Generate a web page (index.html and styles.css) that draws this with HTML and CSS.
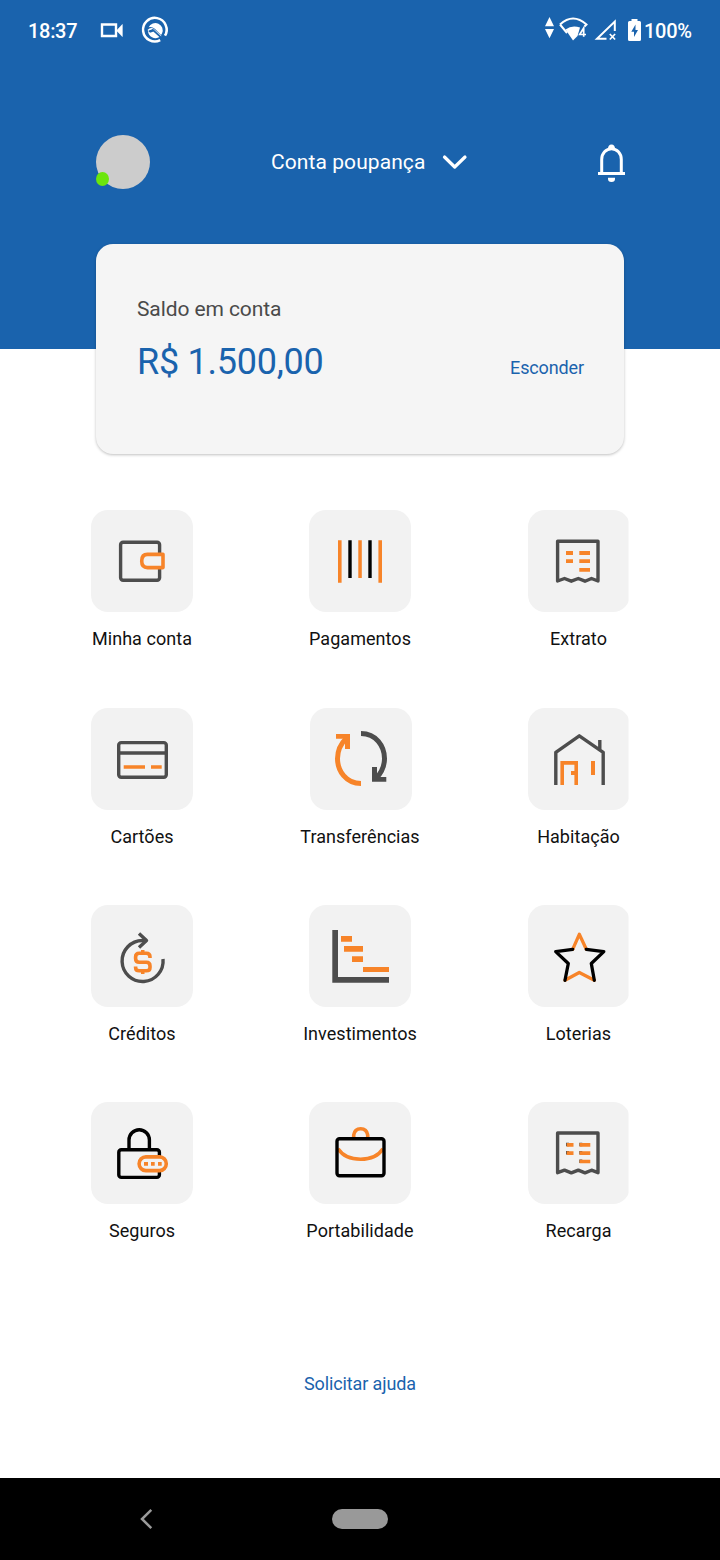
FILE: index.html
```html
<!DOCTYPE html>
<html lang="pt-BR">
<head>
<meta charset="utf-8">
<title>Conta poupança</title>
<link rel="stylesheet" href="styles.css">
</head>
<body>
<div class="screen">
  <header class="header">
    <div class="status">
      <span class="clock">18:37</span>
      <svg class="status-left" width="70" height="30" viewBox="100 15 70 30">
        <path d="M102 24.500h14v11.500h-14z" fill="none" stroke="#fff" stroke-width="2.400"/>
        <path d="M117 30.200l5.300-5.700v12l-5.300-5.500z" fill="#fff" stroke="#fff" stroke-width=".6"/>
        <path d="M160.200 40.200A11.800 11.800 0 1 1 165 35.700" fill="none" stroke="#fff" stroke-width="2.500"/>
        <path d="M148.600 27.200A7.300 7.300 0 0 1 162 33.500L161 35L154.800 28.800Q152 26.500 148.600 27.200Z" fill="#fff"/>
        <path d="M148 30.500Q151 27.500 154 30L161 36.500" fill="none" stroke="#fff" stroke-width="1.500"/>
        <path d="M148 31L150.800 32.500L153.500 31.500L159.500 37A7.500 7.500 0 0 1 148 31Z" fill="#fff"/>
        <path d="M149.500 32l3.300-2.300 8.500 7.800" fill="none" stroke="#1a63ad" stroke-width="1.600"/>
      </svg>
      <svg class="status-right" width="100" height="30" viewBox="542 15 100 30">
        <path d="M545 26.200l4.500-9.200 4.500 9.200zM545 29h9l-4.500 9.200z" fill="#fff"/>
        <path d="M560 24.500Q573 12.500 586.500 24.500L584.500 26.500M560 24.500L567 33" fill="none" stroke="#fff" stroke-width="2"/>
        <path d="M565.500 29.500Q572 24.500 580 27.500L577.500 36L573 40.500z" fill="#fff"/>
        <path d="M583.700 36.800V28L579.700 34.500H586" fill="none" stroke="#fff" stroke-width="1.700"/>
        <path d="M606.500 38.800H597L614.800 21.500V31" fill="none" stroke="#fff" stroke-width="2"/>
        <path d="M609.800 34l5.300 5.500m0-5.500l-5.300 5.500" stroke="#fff" stroke-width="1.700"/>
        <path d="M628 22.500q0-1.500 1.500-1.500h2v-2h6v2h2q1.500 0 1.500 1.500v17q0 1.500-1.500 1.500h-10q-1.500 0-1.500-1.500z" fill="#fff"/>
        <path d="M635.500 24.500l-4.200 7.200h2.700v5.300l4-7h-2.500z" fill="#1a63ad"/>
      </svg>
      <span class="percent">100%</span>
    </div>
    <div class="account-bar">
      <div class="avatar"><span class="online"></span></div>
      <div class="account">
        <span>Conta poupança</span>
        <svg width="26" height="16" viewBox="0 0 26 16"><path d="M2.500 3l10.200 10L23 3" fill="none" stroke="#fff" stroke-width="3.200" stroke-linecap="round" stroke-linejoin="round"/></svg>
      </div>
      <svg class="bell" width="30" height="40" viewBox="0 0 30 40">
        <path d="M5.700 31V18.500a9.800 10.800 0 0 1 19.600 0V31" fill="none" stroke="#fff" stroke-width="3"/>
        <path d="M2 31h27v3H2zM12 39.200v-2.500h7v1.300q0 3-3.500 3t-3.500-3zM12 8q0-4.500 3.500-4.500T19 8z" fill="#fff"/>
      </svg>
    </div>
  </header>

  <section class="card">
    <div class="card-title">Saldo em conta</div>
    <div class="balance-row">
      <span class="balance">R$ 1.500,00</span>
      <span class="link">Esconder</span>
    </div>
  </section>

  <main class="grid">
    <div class="item"><svg class="tile" viewBox="0 0 102 102"><g class="ink"><rect x="29.600" y="32.300" width="39" height="38" rx="2.500"/></g><path class="orange-line" d="M72 44.400v13.200H56.500q-5.800 0-5.800-6.600t5.800-6.600z" stroke-linejoin="round"/></svg><span>Minha conta</span></div>

    <div class="item"><svg class="tile" viewBox="0 0 102 102"><path class="orange" d="M29 30.300h3.600v42.400H29zM49.300 30.300h3.500V68h-3.500zM69.400 30.300H73v42.400h-3.600z"/><path class="black" d="M39.300 30.300h3.400V68h-3.400zM59.300 30.300h3.400V68h-3.400z"/></svg><span>Pagamentos</span></div>

    <div class="item"><svg class="tile clipped" viewBox="0 0 102 102"><path class="ink" d="M29.600 71V31.300H70V71l-6.500-2.500-6.500 2.700-6.700-2.700-7 2.700-6.800-2.700z"/><path class="orange" d="M38 41h7v4h-7zM51.300 41H62v4H51.300zM38 49.300h7v3.700h-7zM51.300 49.300H62V53H51.300zM51.300 58H62v3.700H51.300z"/></svg><span>Extrato</span></div>

    <div class="item"><svg class="tile" viewBox="0 0 102 102"><g class="ink"><rect x="27.700" y="34.600" width="47.600" height="34.700" rx="2.500"/><path d="M28 45h47"/></g><path class="orange" d="M32.700 57.200H54v3.600H32.700zM60 57.200h10.700v3.600H60z"/></svg><span>Cartões</span></div>

    <div class="item"><svg class="tile shifted" viewBox="0 0 102 102"><path d="M51 25.400C66 25.400 74.500 38 74.500 50.500C74.500 59 71 65.500 65.500 71" fill="none" stroke="#4d4d4d" stroke-width="5"/><path class="dark" d="M62 59h5v10h9.300v4.700H62z"/><path d="M51 75.600C36 75.600 27.500 63 27.500 50.500C27.500 42 31 35.500 36.500 30" fill="none" stroke="#f78429" stroke-width="5"/><path class="orange" d="M26 26h14v15h-5V30.700h-9z"/></svg><span>Transferências</span></div>

    <div class="item"><svg class="tile clipped" viewBox="0 0 102 102"><path class="ink" d="M27.800 77V44.300L51.300 27.800L75.200 44.300V77M71.800 42V32"/><path class="orange-line" d="M34.200 77V54.900h14V77"/><path class="orange" d="M43 63h5v4h-5zM63 53h4v14h-4z"/></svg><span>Habitação</span></div>

    <div class="item"><svg class="tile" viewBox="0 0 102 102"><path class="ink" d="M72 54a20.500 20.500 0 1 1-20.500-18.500h4"/><path class="ink" d="M48 28.600l7.500 6.900-7.500 6.900"/><path class="orange-line" d="M59 53v-1q0-3.700-3.700-3.700h-7q-3.700 0-3.700 3.700v1.500q0 3.700 3.700 3.700h7q3.700 0 3.700 3.700v1.500q0 3.400-3.700 3.400h-7q-3.700 0-3.700-3.400v-1"/><path class="orange" d="M50 45h3.500v3H50zM50 66h3.500v3H50z"/></svg><span>Créditos</span></div>

    <div class="item"><svg class="tile" viewBox="0 0 102 102"><path class="dark" d="M23.300 25H29v47h51v5.700H23.300z"/><path class="orange" d="M32 31h11v5.700H32zM35 41h19v5.700H35zM43 51.200h11V57H43zM54 62h26v5H54z"/></svg><span>Investimentos</span></div>

    <div class="item"><svg class="tile clipped" viewBox="0 0 102 102"><g fill="none" stroke-width="3.300" stroke-linejoin="round" stroke-linecap="round"><path stroke="#f78429" d="M44.700 44.300L51.300 29.300L58.300 44.300M37 75.300L51.300 67.500L66.300 75.300"/><path stroke="#000" d="M44.700 44.300L27.700 46.600L40.300 58.500L37 75.300M58.300 44.300L75.800 46.600L63.300 58.500L66.300 75.300"/></g></svg><span>Loterias</span></div>

    <div class="item"><svg class="tile" viewBox="0 0 102 102"><g fill="none" stroke="#000" stroke-width="3.400"><rect x="27.800" y="47.700" width="40.600" height="27.700" rx="2.500"/><path d="M38 47V38a10.200 10.300 0 0 1 20.400 0v9"/></g><rect class="orange-line pill" x="48.100" y="54.900" width="27.200" height="13.700" rx="6.800"/><path class="orange" d="M53 60h4v3.700h-4zM60 60h3.700v3.700H60zM67 60h3.700v3.700H67z"/></svg><span>Seguros</span></div>

    <div class="item"><svg class="tile" viewBox="0 0 102 102"><path class="orange-line" d="M44.700 36v-3q1-6.200 7-6.200t7 6.200v3M29 46.800Q36 57.300 51.600 57.300T74 46.800"/><rect x="28" y="36.700" width="47" height="37" rx="2.500" fill="none" stroke="#000" stroke-width="3.400"/></svg><span>Portabilidade</span></div>

    <div class="item"><svg class="tile clipped" viewBox="0 0 102 102"><path class="ink" d="M29.600 70.700V31H70v39.700l-6.500-2.500-6.500 2.700-6.700-2.700-7 2.700-6.800-2.700z"/><path class="dark" d="M38 40.700h3v3.600h-3zM38 49h3v3.600h-3zM51.300 40.700h3v3.600h-3zM51.300 49h3v3.600h-3zM51.300 57.400h3V61h-3z"/><path class="orange" d="M38.700 41h6.800v3.700h-6.800zM51.600 41h10.700v3.700H51.600zM38.700 49.300h6.800V53h-6.800zM51.600 49.300h10.700V53H51.600zM51.600 57.700h10.700v3.600H51.600z"/></svg><span>Recarga</span></div>
  </main>

  <div class="help"><span class="link">Solicitar ajuda</span></div>

  <nav class="navbar">
    <svg class="back" width="16" height="22" viewBox="0 0 16 22"><path d="M13.300 1.800L4 11l9.300 9.200" fill="none" stroke="#9a9a9a" stroke-width="2.500"/></svg>
    <span class="home"></span>
  </nav>
</div>
</body>
</html>
```
FILE: styles.css
```css
* { box-sizing: border-box; }
body { margin: 0; background: #fff; font-family: Roboto, sans-serif; }
svg { display: block; flex: none; }
.screen { width: 720px; height: 1560px; display: flex; flex-direction: column; overflow: hidden; }

.header { height: 349px; flex: none; background: #1a63ad; color: #fff; }
.status { height: 60px; padding: 1px 0 0 28px; display: flex; align-items: center; font-size: 20px; font-weight: 500; letter-spacing: -0.3px; }
.clock { width: 72px; }
.status-left { margin-top: -1px; }
.status-right { margin: -1px 2px 0 372px; }

.account-bar { height: 54px; margin-top: 75px; padding: 0 94px 0 96px; display: flex; align-items: center; }
.avatar { width: 54px; height: 54px; border-radius: 50%; background: #ccc; display: flex; align-items: flex-end; }
.online { width: 13px; height: 14px; margin-bottom: 3px; border-radius: 50%; background: #6be60c; }
.account { display: flex; align-items: center; gap: 17px; font-size: 21px; letter-spacing: 0.08px; margin-left: 121px; }
.bell { overflow: visible; margin: -2px 0 0 auto; }

.card { width: 528px; height: 210px; flex: none; margin: -105px 0 0 96px; padding: 52px 40px 0 41px; border-radius: 17px; background: #f5f5f5; box-shadow: 0 1px 3px rgba(0, 0, 0, 0.25); }
.card-title { font-size: 21px; line-height: 26px; letter-spacing: -0.1px; color: #4a4a4a; }
.balance-row { margin-top: 18px; display: flex; align-items: baseline; justify-content: space-between; }
.balance { font-size: 36px; line-height: 44px; letter-spacing: -0.25px; color: #1a63ad; }
.link { font-size: 18px; color: #1a63ad; letter-spacing: -0.12px; }

.grid { height: 789px; flex: none; margin: 56px 32px 0 33px; display: grid; grid-template-columns: 218px 218px 219px; grid-template-rows: 198px 197px 197px 197px; }
.item { display: flex; flex-direction: column; align-items: center; gap: 16px; color: #111; font-size: 18px; line-height: 22px; letter-spacing: 0.05px; }
.tile { width: 102px; height: 102px; border-radius: 17px; background: #f2f2f2; }
.shifted { margin-left: 2px; }
.clipped { clip-path: inset(0 1px 0 0); }

.ink { fill: none; stroke: #4d4d4d; stroke-width: 3.4; stroke-linejoin: round; }
.orange-line { fill: none; stroke: #f78429; stroke-width: 3.6; }
.tile .orange-line[stroke-linejoin], .pill { fill: #f2f2f2; }
.orange { fill: #f78429; }
.dark { fill: #4d4d4d; }
.black { fill: #000; }

.help { height: 179px; flex: none; display: flex; justify-content: center; padding-top: 74px; }
.navbar { height: 82px; flex: none; padding-left: 138px; background: #000; display: flex; align-items: center; }
.home { width: 56px; height: 20px; margin-left: 178px; border-radius: 10px; background: #999; }
```
